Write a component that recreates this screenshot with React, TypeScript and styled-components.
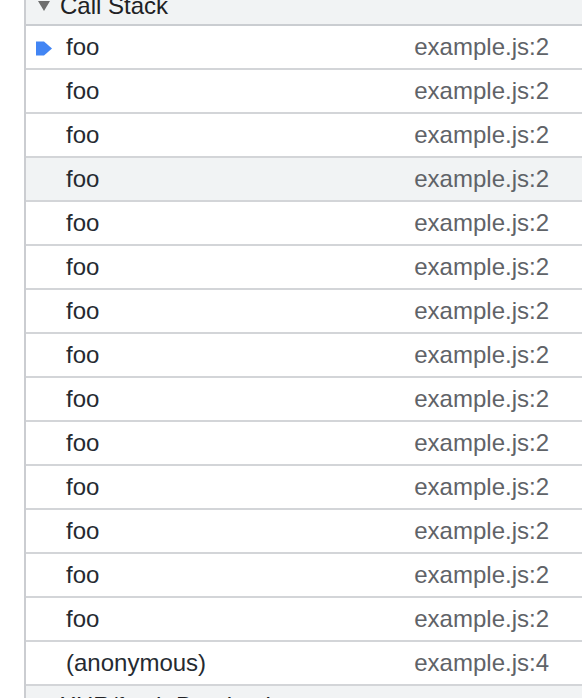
import React from "react";
import styled, { createGlobalStyle } from "styled-components";

const Global = createGlobalStyle`
  html, body { margin: 0; padding: 0; background: #ffffff; overflow: hidden; }
  body { font-family: "Liberation Sans", Arial, sans-serif; }
`;

const Page = styled.div`
  width: 582px;
  height: 698px;
  overflow: hidden;
  padding-left: 24px;
  box-sizing: border-box;
`;

const Panel = styled.div`
  border-left: 2px solid #cbcdd1;
  height: 100%;
  display: flex;
  flex-direction: column;
`;

const SectionHeader = styled.div<{ $top?: boolean }>`
  flex: none;
  height: ${(p) => (p.$top ? "36px" : "39px")};
  margin-top: ${(p) => (p.$top ? "-12px" : "0")};
  background: #f1f3f4;
  border-bottom: ${(p) => (p.$top ? "2px solid #cacdd1" : "none")};
  display: flex;
  align-items: center;
  padding-left: 12px;
  gap: 10px;
  font-size: 24px;
  color: #202124;
`;

const Triangle = styled.span`
  width: 0;
  height: 0;
  border-left: 6px solid transparent;
  border-right: 6px solid transparent;
  border-top: 10px solid #6e6e6e;
`;

const RightTriangle = styled.span`
  width: 0;
  height: 0;
  border-top: 6px solid transparent;
  border-bottom: 6px solid transparent;
  border-left: 10px solid #6e6e6e;
  margin-right: 2px;
`;

const Row = styled.div<{ $hover?: boolean }>`
  flex: none;
  height: 42px;
  border-bottom: 2px solid #d3d5d8;
  background: ${(p) => (p.$hover ? "#f1f3f4" : "#ffffff")};
  display: flex;
  align-items: center;
  position: relative;
  padding-left: 40px;
  padding-right: 33px;
  font-size: 24px;
`;

const FuncName = styled.span`
  flex: 1;
  color: #252a31;
`;

const Location = styled.span`
  color: #5f6368;
`;

const Marker = styled.svg`
  position: absolute;
  left: 10px;
  top: 15px;
`;

const frames = [
  ...Array.from({ length: 14 }, () => ({ name: "foo", loc: "example.js:2" })),
  { name: "(anonymous)", loc: "example.js:4" },
];

export default function App() {
  return (
    <Page>
      <Global />
      <Panel>
        <SectionHeader $top>
          <Triangle />
          <span>Call Stack</span>
        </SectionHeader>
        {frames.map((f, i) => (
          <Row key={i} $hover={i === 3}>
            {i === 0 && (
              <Marker width="16" height="15" viewBox="0 0 16 15">
                <path d="M0 0.5 H8 L16 7.5 L8 14.5 H0 Z" fill="#4285f4" />
              </Marker>
            )}
            <FuncName>{f.name}</FuncName>
            <Location>{f.loc}</Location>
          </Row>
        ))}
        <SectionHeader>
          <RightTriangle />
          <span>XHR/fetch Breakpoints</span>
        </SectionHeader>
      </Panel>
    </Page>
  );
}
